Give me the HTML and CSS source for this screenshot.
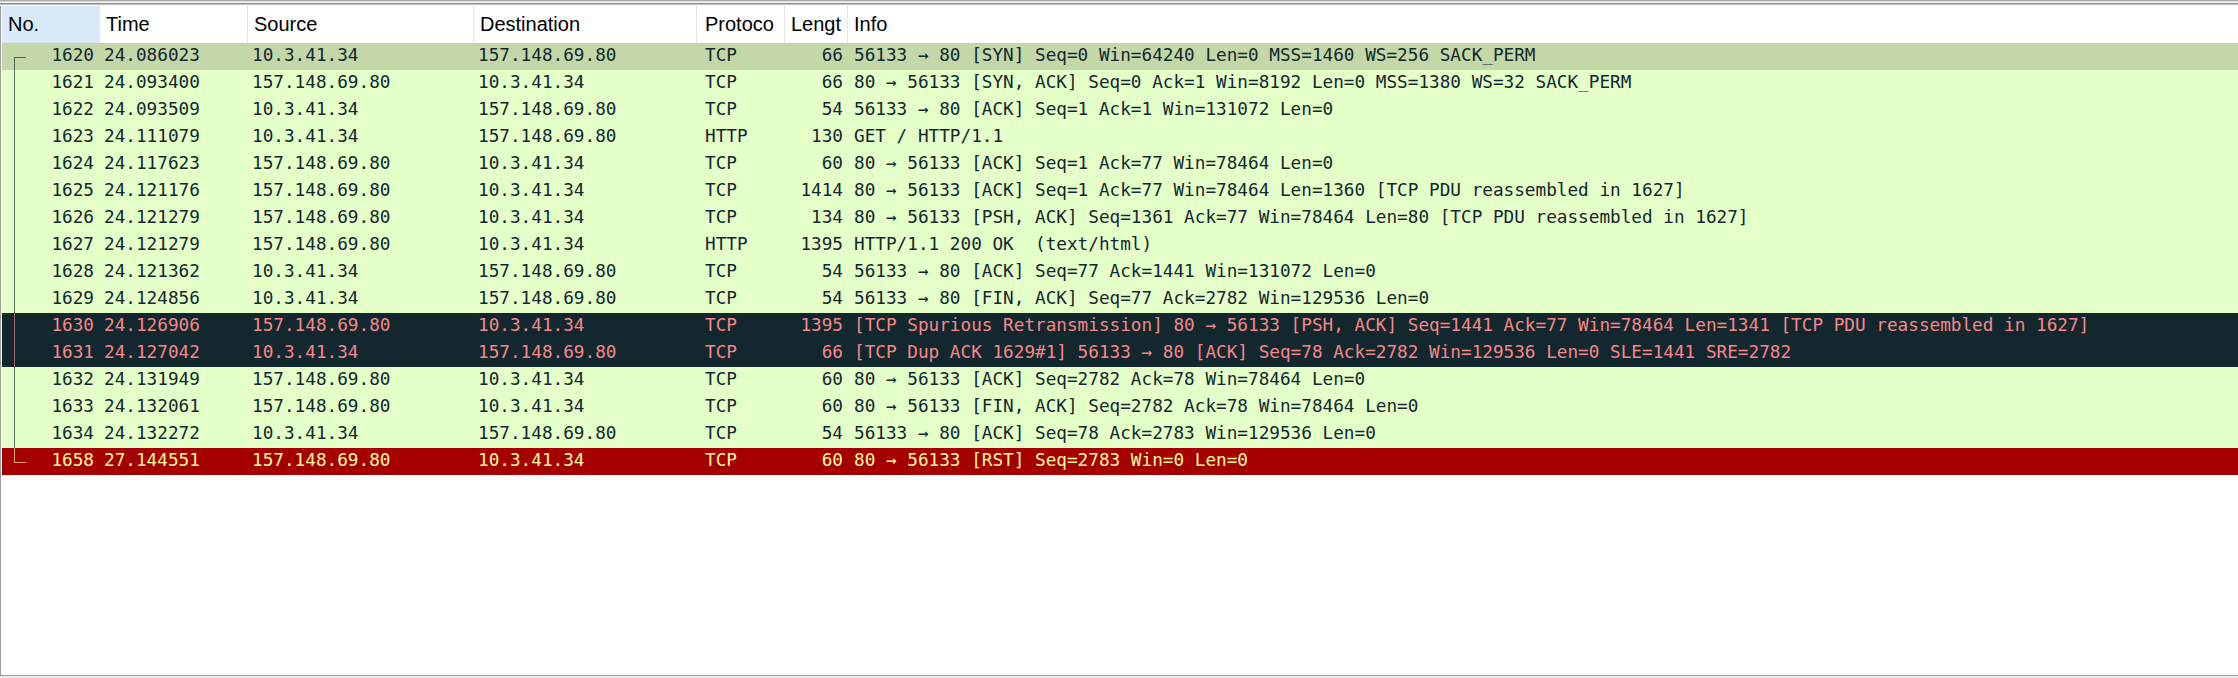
FILE: index.html
```html
<!DOCTYPE html>
<html>
<head>
<meta charset="utf-8">
<title>Packet list</title>
<link rel="stylesheet" href="styles.css">
</head>
<body>
<div class="window">
  <div class="topbar"></div>
  <div class="pane">
    <div class="cols header">
      <div class="hcell sorted">No.</div>
      <div class="hcell">Time</div>
      <div class="hcell">Source</div>
      <div class="hcell">Destination</div>
      <div class="hcell proto">Protoco</div>
      <div class="hcell">Lengt</div>
      <div class="hcell last">Info</div>
    </div>
    <div class="rows">
      <div class="cols row sel"><div class="c no tree first">1620</div><div class="c">24.086023</div><div class="c">10.3.41.34</div><div class="c">157.148.69.80</div><div class="c proto">TCP</div><div class="c len">66</div><div class="c info">56133 → 80 [SYN] Seq=0 Win=64240 Len=0 MSS=1460 WS=256 SACK_PERM</div></div>
      <div class="cols row ok"><div class="c no tree mid">1621</div><div class="c">24.093400</div><div class="c">157.148.69.80</div><div class="c">10.3.41.34</div><div class="c proto">TCP</div><div class="c len">66</div><div class="c info">80 → 56133 [SYN, ACK] Seq=0 Ack=1 Win=8192 Len=0 MSS=1380 WS=32 SACK_PERM</div></div>
      <div class="cols row ok"><div class="c no tree mid">1622</div><div class="c">24.093509</div><div class="c">10.3.41.34</div><div class="c">157.148.69.80</div><div class="c proto">TCP</div><div class="c len">54</div><div class="c info">56133 → 80 [ACK] Seq=1 Ack=1 Win=131072 Len=0</div></div>
      <div class="cols row ok"><div class="c no tree mid">1623</div><div class="c">24.111079</div><div class="c">10.3.41.34</div><div class="c">157.148.69.80</div><div class="c proto">HTTP</div><div class="c len">130</div><div class="c info">GET / HTTP/1.1</div></div>
      <div class="cols row ok"><div class="c no tree mid">1624</div><div class="c">24.117623</div><div class="c">157.148.69.80</div><div class="c">10.3.41.34</div><div class="c proto">TCP</div><div class="c len">60</div><div class="c info">80 → 56133 [ACK] Seq=1 Ack=77 Win=78464 Len=0</div></div>
      <div class="cols row ok"><div class="c no tree mid">1625</div><div class="c">24.121176</div><div class="c">157.148.69.80</div><div class="c">10.3.41.34</div><div class="c proto">TCP</div><div class="c len">1414</div><div class="c info">80 → 56133 [ACK] Seq=1 Ack=77 Win=78464 Len=1360 [TCP PDU reassembled in 1627]</div></div>
      <div class="cols row ok"><div class="c no tree mid">1626</div><div class="c">24.121279</div><div class="c">157.148.69.80</div><div class="c">10.3.41.34</div><div class="c proto">TCP</div><div class="c len">134</div><div class="c info">80 → 56133 [PSH, ACK] Seq=1361 Ack=77 Win=78464 Len=80 [TCP PDU reassembled in 1627]</div></div>
      <div class="cols row ok"><div class="c no tree mid">1627</div><div class="c">24.121279</div><div class="c">157.148.69.80</div><div class="c">10.3.41.34</div><div class="c proto">HTTP</div><div class="c len">1395</div><div class="c info">HTTP/1.1 200 OK  (text/html)</div></div>
      <div class="cols row ok"><div class="c no tree mid">1628</div><div class="c">24.121362</div><div class="c">10.3.41.34</div><div class="c">157.148.69.80</div><div class="c proto">TCP</div><div class="c len">54</div><div class="c info">56133 → 80 [ACK] Seq=77 Ack=1441 Win=131072 Len=0</div></div>
      <div class="cols row ok"><div class="c no tree mid">1629</div><div class="c">24.124856</div><div class="c">10.3.41.34</div><div class="c">157.148.69.80</div><div class="c proto">TCP</div><div class="c len">54</div><div class="c info">56133 → 80 [FIN, ACK] Seq=77 Ack=2782 Win=129536 Len=0</div></div>
      <div class="cols row bad"><div class="c no tree mid">1630</div><div class="c">24.126906</div><div class="c">157.148.69.80</div><div class="c">10.3.41.34</div><div class="c proto">TCP</div><div class="c len">1395</div><div class="c info">[TCP Spurious Retransmission] 80 → 56133 [PSH, ACK] Seq=1441 Ack=77 Win=78464 Len=1341 [TCP PDU reassembled in 1627]</div></div>
      <div class="cols row bad"><div class="c no tree mid">1631</div><div class="c">24.127042</div><div class="c">10.3.41.34</div><div class="c">157.148.69.80</div><div class="c proto">TCP</div><div class="c len">66</div><div class="c info">[TCP Dup ACK 1629#1] 56133 → 80 [ACK] Seq=78 Ack=2782 Win=129536 Len=0 SLE=1441 SRE=2782</div></div>
      <div class="cols row ok"><div class="c no tree mid">1632</div><div class="c">24.131949</div><div class="c">157.148.69.80</div><div class="c">10.3.41.34</div><div class="c proto">TCP</div><div class="c len">60</div><div class="c info">80 → 56133 [ACK] Seq=2782 Ack=78 Win=78464 Len=0</div></div>
      <div class="cols row ok"><div class="c no tree mid">1633</div><div class="c">24.132061</div><div class="c">157.148.69.80</div><div class="c">10.3.41.34</div><div class="c proto">TCP</div><div class="c len">60</div><div class="c info">80 → 56133 [FIN, ACK] Seq=2782 Ack=78 Win=78464 Len=0</div></div>
      <div class="cols row ok"><div class="c no tree mid">1634</div><div class="c">24.132272</div><div class="c">10.3.41.34</div><div class="c">157.148.69.80</div><div class="c proto">TCP</div><div class="c len">54</div><div class="c info">56133 → 80 [ACK] Seq=78 Ack=2783 Win=129536 Len=0</div></div>
      <div class="cols row rst"><div class="c no tree last">1658</div><div class="c">27.144551</div><div class="c">157.148.69.80</div><div class="c">10.3.41.34</div><div class="c proto">TCP</div><div class="c len">60</div><div class="c info">80 → 56133 [RST] Seq=2783 Win=0 Len=0</div></div>
    </div>
  </div>
</div>
</body>
</html>
```
FILE: styles.css
```css
html, body {
  margin: 0;
  padding: 0;
}
body {
  width: 2238px;
  height: 678px;
  overflow: hidden;
  background: #ececec;
}
.window {
  display: flex;
  flex-direction: column;
}
.topbar {
  height: 6px;
  background: linear-gradient(to bottom,
    #a9a9a9 0, #a9a9a9 1px,
    #dcdcdc 1px, #dcdcdc 2px,
    #f2f2f2 2px, #f2f2f2 3px,
    #8e8e8e 3px, #8e8e8e 4px,
    #c4c4c4 4px, #c4c4c4 5px,
    #f7f7f7 5px, #f7f7f7 6px);
}
.pane {
  height: 670px;
  box-sizing: border-box;
  background: #ffffff;
  border-left: 1px solid #9c9c9c;
  border-bottom: 1px solid #9c9c9c;
  padding-left: 1px;
}
.cols {
  display: grid;
  grid-template-columns: 98px 148px 226px 223px 88px 63px 1fr;
}
.header {
  height: 37px;
  font-family: "Liberation Sans", Arial, sans-serif;
  font-size: 20px;
  color: #000;
}
.hcell {
  line-height: 37px;
  padding-left: 6px;
  border-right: 1px solid #e6e6e6;
  white-space: nowrap;
  overflow: hidden;
}
.hcell.sorted {
  background: #d9e9f8;
  border-right-color: #d9e9f8;
}
.hcell.proto {
  padding-left: 8px;
}
.hcell.last {
  border-right: none;
}
.row {
  height: 27px;
  font-family: "DejaVu Sans Mono", "Liberation Mono", monospace;
  font-size: 17.7px;
}
.c {
  line-height: 24px;
  padding: 0 0 3px 4px;
  white-space: pre;
  overflow: hidden;
}
.c.no {
  text-align: right;
  padding-right: 6px;
  position: relative;
}
.c.len {
  text-align: right;
  padding-right: 5px;
}
.c.proto {
  padding-left: 8px;
}
.c.info {
  padding-left: 6px;
}
.row.sel {
  background: #c3d7a8;
  color: #12272e;
}
.row.ok {
  background: #e4ffc7;
  color: #12272e;
}
.row.bad {
  background: #12272e;
  color: #f78787;
}
.row.rst {
  background: #a40000;
  color: #fffc9c;
}
/* related-packet tree line */
.tree::before {
  content: "";
  position: absolute;
  left: 12px;
  border-color: currentColor;
  border-style: solid;
  border-width: 0;
  opacity: 0.65;
}
.tree.first::before {
  top: 14px;
  bottom: 0;
  width: 11px;
  border-left-width: 1px;
  border-top-width: 1px;
}
.tree.mid::before {
  top: 0;
  bottom: 0;
  border-left-width: 1px;
}
.tree.last::before {
  top: 0;
  height: 14px;
  width: 11px;
  border-left-width: 1px;
  border-bottom-width: 1px;
}
```
